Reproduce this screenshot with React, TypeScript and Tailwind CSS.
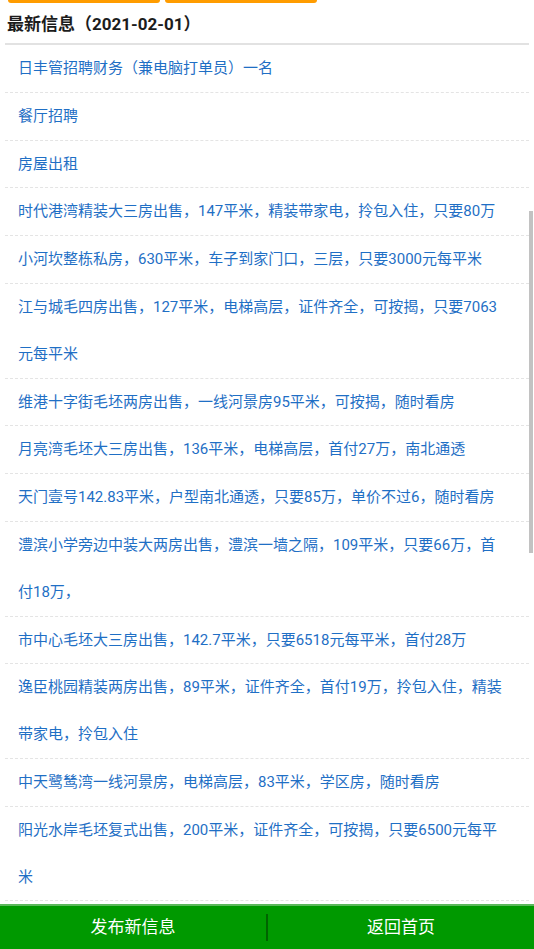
import React from 'react';

const items: string[] = [
  '日丰管招聘财务（兼电脑打单员）一名',
  '餐厅招聘',
  '房屋出租',
  '时代港湾精装大三房出售，147平米，精装带家电，拎包入住，只要80万',
  '小河坎整栋私房，630平米，车子到家门口，三层，只要3000元每平米',
  '江与城毛四房出售，127平米，电梯高层，证件齐全，可按揭，只要7063元每平米',
  '维港十字街毛坯两房出售，一线河景房95平米，可按揭，随时看房',
  '月亮湾毛坯大三房出售，136平米，电梯高层，首付27万，南北通透',
  '天门壹号142.83平米，户型南北通透，只要85万，单价不过6，随时看房',
  '澧滨小学旁边中装大两房出售，澧滨一墙之隔，109平米，只要66万，首付18万，',
  '市中心毛坯大三房出售，142.7平米，只要6518元每平米，首付28万',
  '逸臣桃园精装两房出售，89平米，证件齐全，首付19万，拎包入住，精装带家电，拎包入住',
  '中天鹭鸶湾一线河景房，电梯高层，83平米，学区房，随时看房',
  '阳光水岸毛坯复式出售，200平米，证件齐全，可按揭，只要6500元每平米',
];

const App = () => {
  return (
    <div className="relative min-h-[949px] bg-white font-['Roboto','Noto_Sans_CJK_SC',sans-serif] pb-[48px]">
      {/* --- TOP BUTTON EDGES --- */}
      <div className="flex gap-[5px] pl-[8px]">
        <div className="h-[3px] w-[152px] bg-[#ff9c00] rounded-b-sm" />
        <div className="h-[3px] w-[152px] bg-[#ff9c00] rounded-b-sm" />
      </div>

      <div className="mx-[5px]">
        {/* --- HEADING --- */}
        <h2 className="h-[42px] flex items-center pt-[4px] pl-[2px] text-[17px] font-bold text-[#1c1c1c] border-b-2 border-[#e2e2e2]">
          最新信息（2021-02-01）
        </h2>

        {/* --- LIST --- */}
        <ul>
          {items.map((text, index) => (
            <li
              key={index}
              className="border-b border-dashed border-[#e4e4e4] pl-[13px] pr-[21px] text-[15px] leading-[46.8px] text-[#1f6fc5]"
            >
              {text}
            </li>
          ))}
        </ul>
      </div>

      {/* --- SCROLLBAR --- */}
      <div className="fixed right-[1px] top-[211px] h-[342px] w-[4px] bg-[#c2c2c2]" />

      {/* --- FOOTER --- */}
      <div className="fixed bottom-0 left-0 right-0 h-[45px] flex items-center bg-[#009900] border-t-2 border-[#5cb85c] text-white text-[17px]">
        <button className="flex-1 h-full">发布新信息</button>
        <div className="w-[2px] h-[27px] bg-[#006400]" />
        <button className="flex-1 h-full">返回首页</button>
      </div>
    </div>
  );
};

export default App;
